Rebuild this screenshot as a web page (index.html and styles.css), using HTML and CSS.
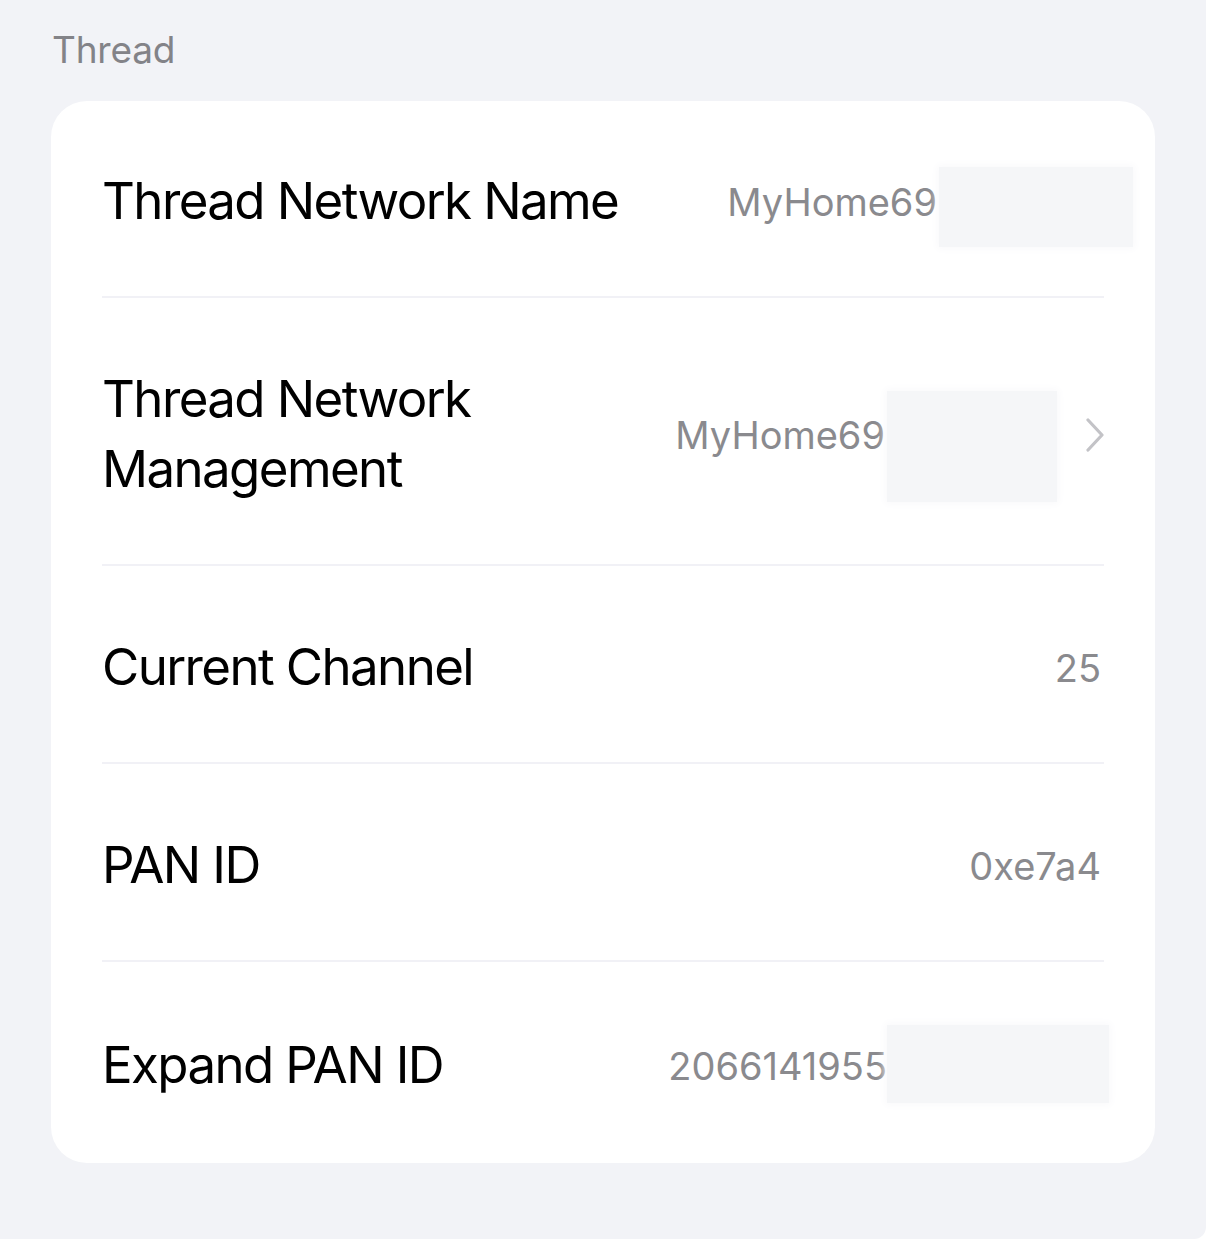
FILE: index.html
```html
<!DOCTYPE html>
<html>
<head>
<meta charset="utf-8">
<link rel="stylesheet" href="styles.css">
</head>
<body>
<div class="page">
  <div class="section-title">Thread</div>
  <div class="card">
    <div class="row row-1">
      <div class="label">Thread Network Name</div>
      <div class="value value-1"><span>MyHome69</span><span class="blur blur-1"></span></div>
    </div>
    <div class="sep"></div>
    <div class="row row-2">
      <div class="label label-wrap">Thread Network<br>Management</div>
      <div class="value value-2"><span>MyHome69</span><span class="blur blur-2"></span>
        <svg class="chev" width="20" height="34" viewBox="0 0 20 34"><path d="M3 2 L17 17 L3 32" fill="none" stroke="#c3c3c7" stroke-width="3.2" stroke-linecap="round" stroke-linejoin="round"/></svg>
      </div>
    </div>
    <div class="sep"></div>
    <div class="row">
      <div class="label">Current Channel</div>
      <div class="value">25</div>
    </div>
    <div class="sep"></div>
    <div class="row">
      <div class="label">PAN ID</div>
      <div class="value">0xe7a4</div>
    </div>
    <div class="sep"></div>
    <div class="row row-5">
      <div class="label">Expand PAN ID</div>
      <div class="value value-5"><span>2066141955</span><span class="blur blur-5"></span></div>
    </div>
  </div>
</div>
</body>
</html>
```
FILE: styles.css
```css
html, body {
  margin: 0;
  padding: 0;
  background: #ffffff;
}
.page {
  width: 1206px;
  height: 1239px;
  box-sizing: border-box;
  background: #f2f3f7;
  border-bottom-right-radius: 12px;
  padding-top: 27px;
  font-family: Inter, "Liberation Sans", sans-serif;
}
.section-title {
  margin-left: 52px;
  font-size: 37px;
  line-height: 46px;
  color: #838388;
  letter-spacing: -0.2px;
}
.card {
  margin-top: 28px;
  margin-left: 51px;
  width: 1104px;
  background: #ffffff;
  border-radius: 36px;
}
.row {
  display: flex;
  align-items: center;
  justify-content: space-between;
  height: 196px;
  padding-left: 51px;
  padding-right: 54px;
  box-sizing: border-box;
}
.row-1 { height: 195px; }
.row-2 { height: 266px; }
.row-5 { height: 201px; }
.label {
  font-size: 51px;
  line-height: 70px;
  color: #000000;
  letter-spacing: -1.6px;
  padding-top: 5px;
}
.value {
  font-size: 38px;
  color: #8a8a8e;
  display: flex;
  align-items: center;
  letter-spacing: 0px;
  padding-top: 7px;
}
.sep {
  height: 2px;
  background: #f1f1f6;
  margin-left: 51px;
  margin-right: 51px;
}
.blur {
  display: block;
  background: #f5f6f8;
  box-shadow: 0 0 8px 2px #f9f9fb;
}
.blur-1 {
  width: 194px;
  height: 80px;
  margin-left: 2px;
  margin-top: 10px;
  margin-right: -32px;
}
.value-2 { padding-top: 0; margin-top: 8px; }
.blur-2 {
  width: 170px;
  height: 111px;
  margin-left: 2px;
  margin-top: 22px;
}
.chev {
  margin-left: 28px;
  margin-right: -4px;
}
.blur-5 {
  width: 222px;
  height: 78px;
  margin-right: -8px;
  margin-top: -4px;
}
```
